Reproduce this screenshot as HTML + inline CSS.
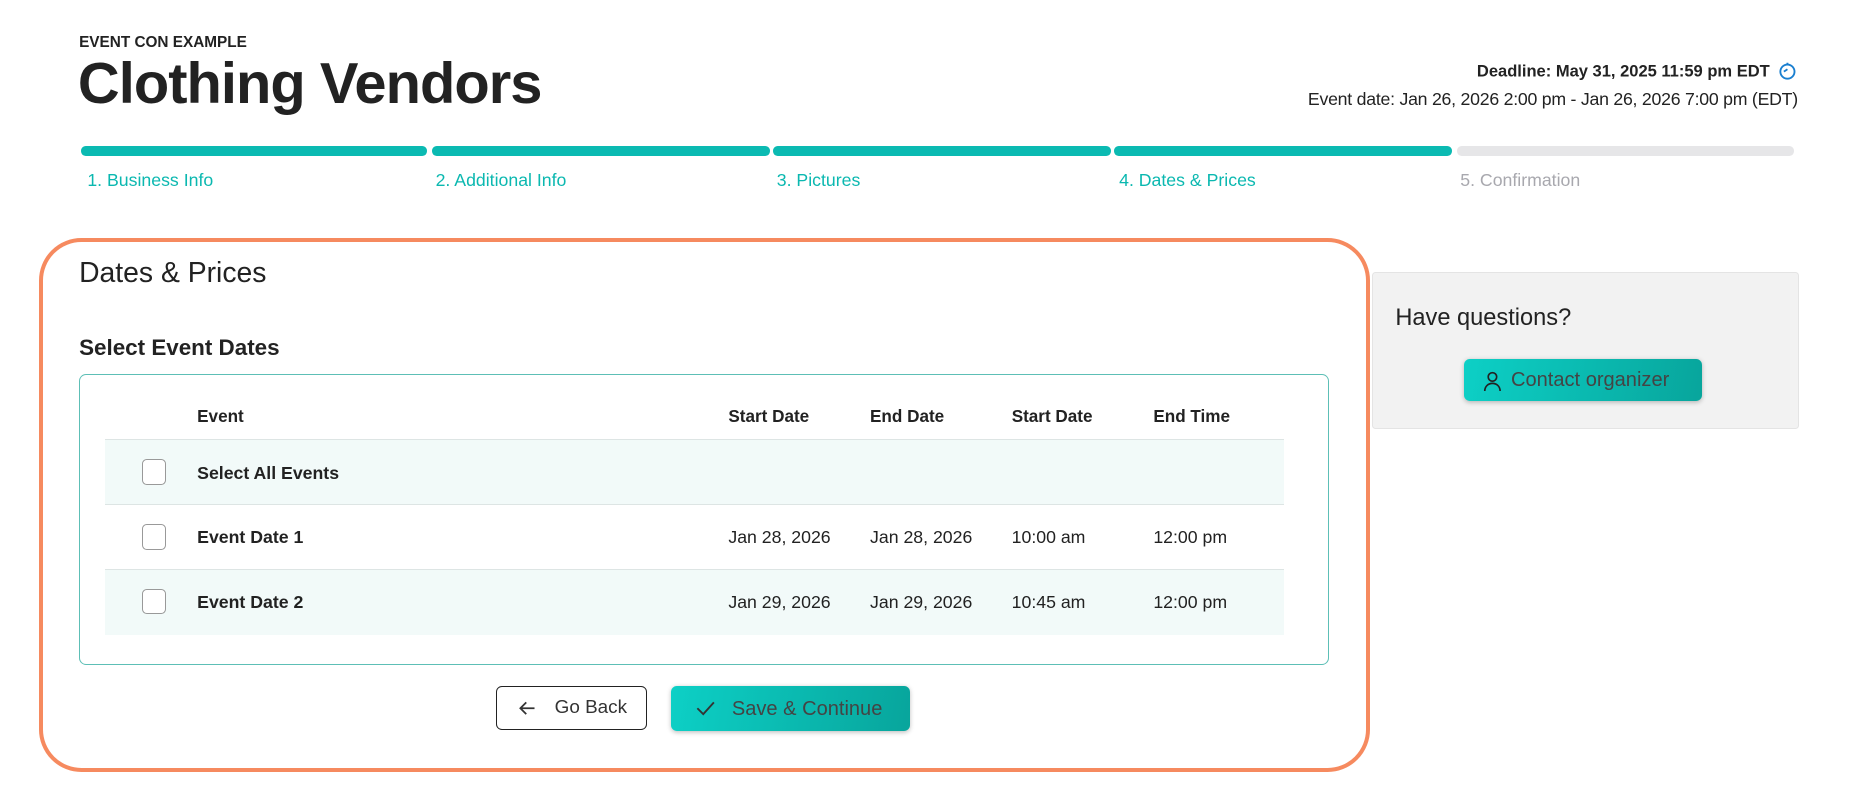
<!DOCTYPE html>
<html><head><style>
html,body{margin:0;padding:0;background:#fff;}
body{width:1568px;height:675px;zoom:1.1805;position:relative;overflow:hidden;font-family:"Liberation Sans",sans-serif;color:#222;}
.a{position:absolute;white-space:nowrap;}
.seg{position:absolute;top:124px;height:8px;border-radius:4px;background:#0bbab2;}
.lbl{position:absolute;top:144px;font-size:15px;color:#0bb8b0;}
.th{position:absolute;top:345px;font-size:14.5px;font-weight:bold;color:#222;}
.row{position:absolute;left:89px;width:999px;height:55px;}
.cb{position:absolute;left:31px;top:16px;width:19px;height:20px;border:1px solid #999;border-radius:4px;background:#fff;}
.cell{position:absolute;top:19px;font-size:15px;color:#222;}
.btn{position:absolute;border-radius:5px;font-size:16px;}
.teal{background:linear-gradient(100deg,#0dd0c6,#08a59c);box-shadow:0 1px 4px rgba(0,0,0,.25);color:#444;}
</style></head><body>
<div class="a" style="left:67px;top:29px;font-size:13px;font-weight:bold;">EVENT CON EXAMPLE</div>
<div class="a" style="left:66px;top:43px;font-size:49px;font-weight:bold;color:#222;letter-spacing:-0.8px;">Clothing Vendors</div>
<div class="a" style="right:46px;top:52px;font-size:14px;font-weight:bold;">Deadline: May 31, 2025 11:59 pm EDT
<svg width="16" height="16" viewBox="0 0 16 16" style="vertical-align:-3px;margin-left:3px"><circle cx="8" cy="9" r="6" fill="none" stroke="#1a7fd0" stroke-width="1.6"/><path d="M8 3V1.5M5 9l3-2" stroke="#1a7fd0" stroke-width="1.6" fill="none"/></svg></div>
<div class="a" style="right:45px;top:75px;font-size:15px;letter-spacing:-0.2px;">Event date: Jan 26, 2026 2:00 pm - Jan 26, 2026 7:00 pm (EDT)</div>

<div class="seg" style="left:69px;width:293px"></div>
<div class="seg" style="left:366px;width:286px"></div>
<div class="seg" style="left:655px;width:286px"></div>
<div class="seg" style="left:944px;width:286px"></div>
<div class="seg" style="left:1234px;width:286px;background:#e6e6e8"></div>
<div class="lbl" style="left:74px">1. Business Info</div>
<div class="lbl" style="left:369px">2. Additional Info</div>
<div class="lbl" style="left:658px">3. Pictures</div>
<div class="lbl" style="left:948px">4. Dates &amp; Prices</div>
<div class="lbl" style="left:1237px;color:#a8a8ae">5. Confirmation</div>

<div class="a" style="left:1162px;top:230px;width:360px;height:132px;background:#f2f2f2;border:1px solid #e4e4e4;border-radius:3px;"></div>
<div class="a" style="left:1182px;top:258px;font-size:20px;color:#222;">Have questions?</div>
<div class="btn teal" style="left:1240px;top:304px;width:202px;height:36px;">
<svg width="16" height="18" viewBox="0 0 16 18" style="position:absolute;left:16px;top:10px"><circle cx="8" cy="5" r="3.6" fill="none" stroke="#222" stroke-width="1.4"/><path d="M1.5 17c0-4 3-6.5 6.5-6.5s6.5 2.5 6.5 6.5" fill="none" stroke="#222" stroke-width="1.4"/></svg>
<span class="a" style="left:40px;top:9px;font-size:17px;">Contact organizer</span></div>

<div class="a" style="left:33px;top:202px;width:1121px;height:445px;border:4px solid #f68a5f;border-radius:36px;"></div>
<div class="a" style="left:67px;top:218px;font-size:24px;color:#222;">Dates &amp; Prices</div>
<div class="a" style="left:67px;top:284px;font-size:19px;font-weight:bold;">Select Event Dates</div>
<div class="a" style="left:67px;top:317px;width:1057px;height:245px;border:1px solid #5dbfb6;border-radius:6px;"></div>
<div class="th" style="left:167px">Event</div>
<div class="th" style="left:617px">Start Date</div>
<div class="th" style="left:737px">End Date</div>
<div class="th" style="left:857px">Start Date</div>
<div class="th" style="left:977px">End Time</div>
<div class="row" style="top:372px;background:#f2faf9;border-top:1px solid #dde5e4;"><div class="cb"></div><div class="cell" style="left:78px;font-weight:bold">Select All Events</div></div>
<div class="row" style="top:427px;border-top:1px solid #dde5e4;"><div class="cb"></div><div class="cell" style="left:78px;font-weight:bold">Event Date 1</div><div class="cell" style="left:528px">Jan 28, 2026</div><div class="cell" style="left:648px">Jan 28, 2026</div><div class="cell" style="left:768px">10:00 am</div><div class="cell" style="left:888px">12:00 pm</div></div>
<div class="row" style="top:482px;background:#f2faf9;border-top:1px solid #dde5e4;"><div class="cb"></div><div class="cell" style="left:78px;font-weight:bold">Event Date 2</div><div class="cell" style="left:528px">Jan 29, 2026</div><div class="cell" style="left:648px">Jan 29, 2026</div><div class="cell" style="left:768px">10:45 am</div><div class="cell" style="left:888px">12:00 pm</div></div>

<div class="btn" style="left:420px;top:581px;width:126px;height:36px;border:1px solid #222;background:#fff;">
<svg width="16" height="14" viewBox="0 0 16 14" style="position:absolute;left:18px;top:11px"><path d="M14 7H2M7 2L2 7l5 5" fill="none" stroke="#333" stroke-width="1.5"/></svg>
<span class="a" style="left:49px;top:9px;color:#333;">Go Back</span></div>
<div class="btn teal" style="left:568px;top:581px;width:203px;height:38px;">
<svg width="18" height="14" viewBox="0 0 18 14" style="position:absolute;left:21px;top:12px"><path d="M2 7l5 5L16 2" fill="none" stroke="#333" stroke-width="1.6"/></svg>
<span class="a" style="left:52px;top:10px;font-size:17px;">Save &amp; Continue</span></div>
</body></html>
